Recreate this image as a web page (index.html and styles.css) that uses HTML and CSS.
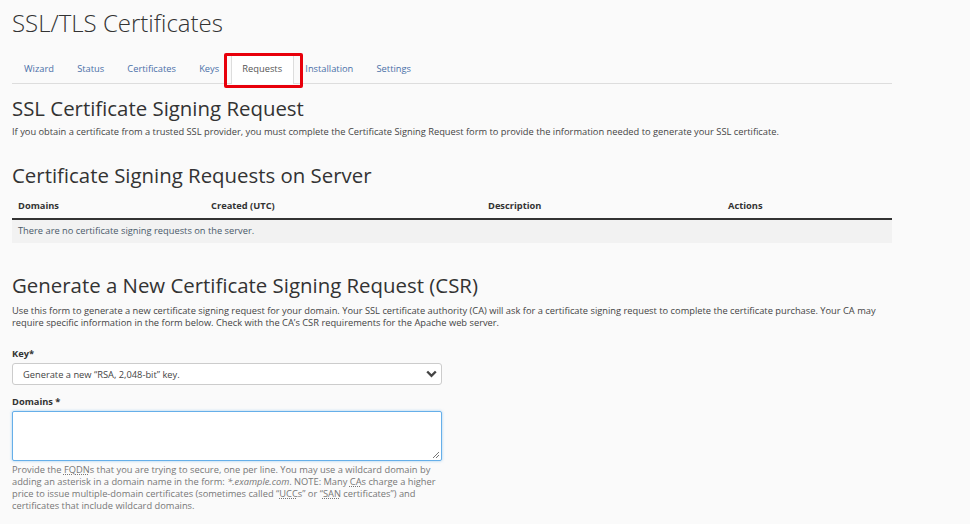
FILE: index.html
```html
<!DOCTYPE html>
<html>
<head>
<meta charset="utf-8">
<link rel="stylesheet" href="styles.css">
</head>
<body>
<div class="page">
  <h1 class="title">SSL/TLS Certificates</h1>
  <nav class="tabs">
    <a class="tab">Wizard</a>
    <a class="tab">Status</a>
    <a class="tab">Certificates</a>
    <a class="tab">Keys</a>
    <a class="tab active">Requests<span class="highlight"></span></a>
    <a class="tab">Installation</a>
    <a class="tab">Settings</a>
  </nav>

  <h2 class="h2 first">SSL Certificate Signing Request</h2>
  <p class="desc">If you obtain a certificate from a trusted SSL provider, you must complete the Certificate Signing Request form to provide the information needed to generate your SSL certificate.</p>

  <h2 class="h2 second">Certificate Signing Requests on Server</h2>
  <table class="grid">
    <thead>
      <tr>
        <th class="c1">Domains</th>
        <th class="c2">Created (UTC)</th>
        <th class="c3">Description</th>
        <th class="c4">Actions</th>
      </tr>
    </thead>
    <tbody>
      <tr><td colspan="4">There are no certificate signing requests on the server.</td></tr>
    </tbody>
  </table>

  <h2 class="h2 third">Generate a New Certificate Signing Request (CSR)</h2>
  <p class="desc">Use this form to generate a new certificate signing request for your domain. Your SSL certificate authority (CA) will ask for a certificate signing request to complete the certificate purchase. Your CA may require specific information in the form below. Check with the CA’s CSR requirements for the Apache web server.</p>

  <form class="form">
    <label class="label">Key*</label>
    <div class="select">
      <span>Generate a new “RSA, 2,048-bit” key.</span>
      <svg class="chev" width="11" height="8" viewBox="0 0 11 8"><path d="M1.2 1.5 L5.5 5.8 L9.8 1.5" fill="none" stroke="#444" stroke-width="2.4"/></svg>
    </div>
    <label class="label l2">Domains *</label>
    <div class="textarea">
      <svg class="grip" width="8" height="8" viewBox="0 0 8 8"><path d="M7 1 L1 7 M7 4 L4 7" stroke="#777" stroke-width="1"/></svg>
    </div>
    <p class="help">Provide the <abbr>FQDN</abbr>s that you are trying to secure, one per line. You may use a wildcard domain by adding an asterisk in a domain name in the form: <em>*.example.com</em>. NOTE: Many <abbr>CA</abbr>s charge a higher price to issue multiple-domain certificates (sometimes called “<abbr>UCC</abbr>s” or “<abbr>SAN</abbr> certificates”) and certificates that include wildcard domains.</p>
  </form>
</div>
</body>
</html>
```

FILE: styles.css
```css
html, body {
  margin: 0;
  padding: 0;
  background: #fafafa;
}
body {
  font-family: "Open Sans", "Liberation Sans", sans-serif;
  color: #333;
}
.page {
  width: 880px;
  padding: 0 12px;
}
.title {
  margin: 0;
  padding-top: 7px;
  font-size: 24px;
  font-weight: 300;
  line-height: 32px;
  color: #333;
}
.tabs {
  display: flex;
  margin-top: 16px;
  border-bottom: 1px solid #ddd;
  height: 28px;
}
.tab {
  position: relative;
  display: block;
  font-size: 9.3px;
  line-height: 28px;
  padding: 0 11.6px;
  color: #4a70a8;
  box-sizing: border-box;
}
.tab:first-child { padding-left: 12px; }
.tab.active {
  background: #fff;
  color: #555;
  border-left: 1px solid #ddd;
  border-right: 1px solid #ddd;
  height: 29px;
  padding: 0 10.6px;
  margin: 0 0 -1px 0;
}
.highlight {
  position: absolute;
  left: -8px;
  right: -10px;
  top: -2px;
  bottom: -4px;
  border: 3px solid #e8000b;
  border-radius: 2px;
}
.h2 {
  margin: 0;
  font-size: 20.4px;
  font-weight: 400;
  line-height: 28px;
  color: #333;
}
.first { margin-top: 10px; }
.second { margin-top: 23px; }
.third { margin-top: 28px; }
.desc {
  margin: 0;
  font-size: 9.3px;
  line-height: 12px;
  color: #444;
}
.first + .desc { margin-top: 4px; }
.third + .desc { margin-top: 6px; }
.grid {
  width: 100%;
  border-collapse: collapse;
  margin-top: 6px;
  font-size: 9.3px;
}
.grid th {
  text-align: left;
  font-weight: 700;
  color: #333;
  padding: 0 6px 3px 6px;
  height: 24px;
  box-sizing: border-box;
  vertical-align: middle;
  border-bottom: 2px solid #333;
}
.grid .c1 { width: 193px; }
.grid .c2 { width: 277px; }
.grid .c3 { width: 240px; }
.grid td {
  background: #f2f2f2;
  padding: 0 6px 2px 6px;
  height: 24px;
  box-sizing: border-box;
  color: #4a5a6a;
}
.form {
  margin-top: 19px;
  width: 430px;
}
.label {
  display: block;
  font-size: 9.3px;
  font-weight: 700;
  color: #333;
  line-height: 12px;
}
.select {
  margin-top: 3px;
  height: 22px;
  border: 1px solid #ccc;
  border-radius: 3px;
  background: #fff;
  display: flex;
  align-items: center;
  justify-content: space-between;
  padding: 0 4px 0 10px;
  box-sizing: border-box;
  font-size: 9.3px;
  color: #444;
}
.l2 { margin-top: 11px; }
.textarea {
  position: relative;
  margin-top: 3px;
  height: 50px;
  border: 1px solid #66afe9;
  box-shadow: 0 0 3px rgba(102,175,233,0.6);
  border-radius: 2px;
  background: #fff;
  box-sizing: border-box;
}
.grip {
  position: absolute;
  right: 1px;
  bottom: 1px;
}
.help {
  margin: 3px 0 0 0;
  font-size: 9.3px;
  line-height: 12px;
  color: #777;
}
.help abbr {
  text-decoration: underline dotted;
}
```
